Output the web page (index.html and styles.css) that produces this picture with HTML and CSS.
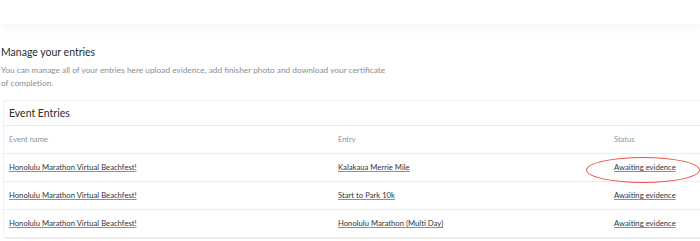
FILE: index.html
```html
<!DOCTYPE html>
<html lang="en">
<head>
  <meta charset="UTF-8">
  <meta name="viewport" content="width=device-width, initial-scale=1.0">
  <title>Manage your entries</title>
  <link rel="stylesheet" href="styles.css">
</head>
<body>
  <!-- Top Bar -->
  <div class="topbar"></div>

  <!-- Intro -->
  <div class="intro">
    <h2>Manage your entries</h2>
    <p>You can manage all of your entries here upload evidence, add finisher photo and download your certificate<br>of completion.</p>
  </div>

  <!-- Entries Card -->
  <div class="card">
    <div class="card-header">Event Entries</div>
    <table>
      <thead>
        <tr>
          <th class="col-event">Event name</th>
          <th class="col-entry">Entry</th>
          <th>Status</th>
        </tr>
      </thead>
      <tbody>
        <tr>
          <td><a href="#">Honolulu Marathon Virtual Beachfest!</a></td>
          <td><a href="#">Kalakaua Merrie Mile</a></td>
          <td class="status">
            <a href="#">Awaiting evidence</a>
            <span class="circle"></span>
          </td>
        </tr>
        <tr>
          <td><a href="#">Honolulu Marathon Virtual Beachfest!</a></td>
          <td><a href="#">Start to Park 10k</a></td>
          <td class="status"><a href="#">Awaiting evidence</a></td>
        </tr>
        <tr>
          <td><a href="#">Honolulu Marathon Virtual Beachfest!</a></td>
          <td><a href="#">Honolulu Marathon (Multi Day)</a></td>
          <td class="status"><a href="#">Awaiting evidence</a></td>
        </tr>
      </tbody>
    </table>
  </div>
</body>
</html>
```

FILE: styles.css
```css
/* Global Styles */
* {
  margin: 0;
  padding: 0;
  box-sizing: border-box;
}

body {
  font-family: 'Lato', 'Liberation Sans', sans-serif;
  background-color: #fff;
  color: #333;
  overflow: hidden;
}

/* Top Bar */
.topbar {
  height: 24px;
  background: #fff;
  box-shadow: 0 3px 12px rgba(0, 0, 0, 0.05);
}

/* Intro */
.intro {
  padding: 21px 0 0 1px;
  height: 76px;
}

.intro h2 {
  font-size: 10.5px;
  font-weight: 400;
  color: #2b2b2b;
  line-height: 14px;
  margin-bottom: 5px;
}

.intro p {
  font-size: 8.3px;
  line-height: 13px;
  color: #8b8e93;
}

/* Card */
.card {
  margin-left: 3px;
  border: 1px solid #efefef;
  border-right: none;
  border-radius: 3px 0 0 3px;
  background: #fff;
}

.card-header {
  height: 25px;
  line-height: 25px;
  padding-left: 5px;
  font-size: 10.5px;
  color: #2b2b2b;
  border-bottom: 1px solid #ececec;
}

/* Table */
table {
  width: 100%;
  border-collapse: collapse;
  table-layout: fixed;
}

th, td {
  text-align: left;
  padding: 0 0 0 5px;
  height: 28px;
  border-bottom: 1px solid #ededed;
  font-size: 7.7px;
  white-space: nowrap;
}

th {
  font-weight: 400;
  font-size: 7.5px;
  color: #8e939c;
  height: 27px;
}

.col-event {
  width: 329px;
}

.col-entry {
  width: 276px;
}

td a {
  color: #2f3440;
  text-decoration: underline;
  text-decoration-color: #8a909a;
}

.status {
  position: relative;
}

/* Red annotation circle */
.circle {
  position: absolute;
  left: -23px;
  top: 3px;
  width: 114px;
  height: 26px;
  border: 1px solid #e8574c;
  border-radius: 50%;
  pointer-events: none;
}
```
